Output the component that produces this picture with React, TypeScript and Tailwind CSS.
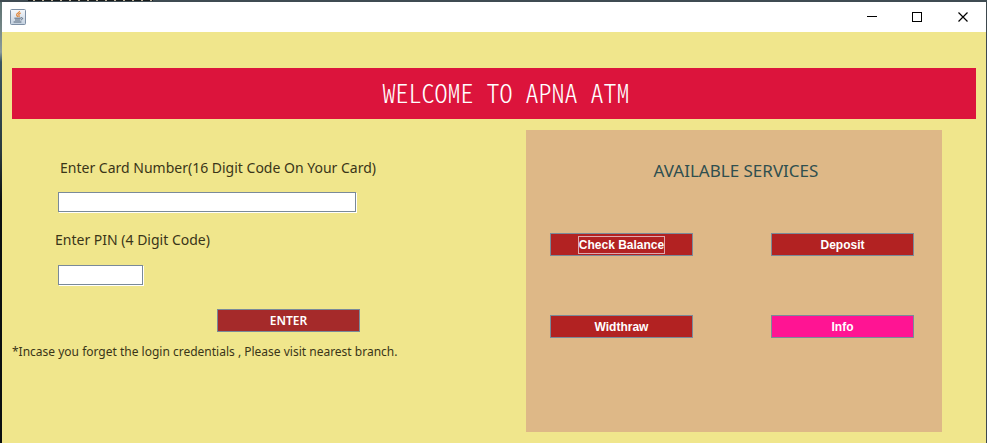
import type { ReactNode } from "react";

function JavaIcon() {
  return (
    <svg width="16" height="16" viewBox="0 0 16 16" aria-hidden="true" className="shrink-0">
      <defs>
        <linearGradient id="tile" x1="0" y1="0" x2="0" y2="1">
          <stop offset="0" stopColor="#f6f8fb" />
          <stop offset="1" stopColor="#c3d0df" />
        </linearGradient>
      </defs>
      <rect x="0.5" y="0.5" width="15" height="15" rx="1" fill="url(#tile)" stroke="#7d8fa5" />
      <path d="M9.5 2C10 3.800 6.200 4.200 6.600 6c.2.8 1 1.200 1.200 2M10.800 4C9 4.600 8.300 5.400 9 6.400c.4.5.2 1.100-.2 1.600" fill="none" stroke="#e08a42" strokeWidth="1.3" />
      <path d="M4.400 9.200H10.800M5 11H10M3.600 13H11.400" fill="none" stroke="#56687c" strokeWidth="1" />
      <path d="M10.800 8.800C13.400 8.200 13.200 10.600 10.600 11" fill="none" stroke="#56687c" strokeWidth="1" />
    </svg>
  );
}

function WindowControl({ label, children }: { label: string; children: ReactNode }) {
  return (
    <button type="button" aria-label={label} className="flex h-[30px] w-[46px] items-center justify-center">
      <svg width="11" height="11" viewBox="0 0 11 11" fill="none" stroke="#000" shapeRendering="crispEdges">
        {children}
      </svg>
    </button>
  );
}

function TitleBar() {
  return (
    <header className="flex h-[30px] items-center justify-between bg-white pl-2">
      <JavaIcon />
      <div className="flex">
        <WindowControl label="Minimize"><path d="M1 4.500H11" /></WindowControl>
        <WindowControl label="Maximize"><path d="M.5 .5H9.500V9.500H.5Z" /></WindowControl>
        <WindowControl label="Close"><path d="M.5 .5L9.500 9.500M9.500 .5L.5 9.500" shapeRendering="auto" strokeWidth="1.2" /></WindowControl>
      </div>
    </header>
  );
}

function ServiceButton({ children, color = "bg-[#b22222]", focused = false }: { children: ReactNode; color?: string; focused?: boolean }) {
  return (
    <button
      type="button"
      className={`flex h-[23px] w-[143px] items-center justify-center border border-[#7a8a99] font-['Liberation_Sans',Arial,sans-serif] text-xs font-bold text-white ${color}`}
    >
      <span className={focused ? "border border-[#e0a9ae] leading-4" : "leading-4"}>{children}</span>
    </button>
  );
}

const FIELD = "block h-5 border border-[#7a8a99] bg-white px-1 text-xs shadow-[1px_1px_0_#fff] outline-none";

export default function App() {
  return (
    <div className="flex min-h-screen flex-col bg-[#3d484e]">
      <div className="h-[2px] bg-[#3f4b52]">
        <div className="ml-7 h-px w-[125px] bg-[repeating-linear-gradient(90deg,#15191b_0_5px,#b9ae98_5px_7px,#15191b_7px_9px)]" />
      </div>
      <div className="flex flex-1 bg-[linear-gradient(#5b7070_0,#8b9b9b_50px,#3a5560_60px,#2a3a3d_150px,#0a0e10_200px,#0a0e10)] pl-[2px]">
        <div className="flex flex-1 flex-col border-r border-[#3d484e] bg-[#f0e68c]">
          <TitleBar />
          <main className="flex flex-1 flex-col px-2.5 pt-9">
            <h1 className="bg-[#dc143c] pb-1 pl-6 text-center font-['Noto_Sans_CJK_SC',monospace] text-[26px] leading-[47px] font-light text-white [font-feature-settings:'hwid']">
              WELCOME TO APNA ATM
            </h1>
            <div className="mt-[11px] grid grid-cols-[514fr_416fr] pr-[34px]">
              <form className="flex flex-col items-start pt-7 font-['Noto_Sans',Tahoma,sans-serif] text-[#3a3518]" onSubmit={(e) => e.preventDefault()}>
                <label htmlFor="card" className="ml-12 text-sm leading-5">Enter Card Number(16 Digit Code On Your Card)</label>
                <input id="card" type="text" className={`mt-3.5 ml-[46px] w-[298px] ${FIELD}`} />
                <label htmlFor="pin" className="mt-[18px] ml-[43px] text-sm leading-5">Enter PIN (4 Digit Code)</label>
                <input id="pin" type="password" className={`mt-[15px] ml-[46px] w-[85px] ${FIELD}`} />
                <button type="submit" className="mt-6 ml-[205px] h-[23px] w-[143px] border border-[#7a8a99] bg-[#a52a2a] text-xs font-semibold text-white">
                  ENTER
                </button>
                <p className="mt-2.5 text-xs leading-5">*Incase you forget the login credentials , Please visit nearest branch.</p>
              </form>
              <section className="flex h-[302px] flex-col bg-[#deb887] pt-[29px] pr-7 pl-6">
                <h2 className="pl-2 text-center font-['Noto_Sans',sans-serif] text-[17px] leading-6 text-[#2f4f4f]">AVAILABLE SERVICES</h2>
                <div className="mt-[50px] grid grid-cols-[auto_auto] justify-between gap-y-[59px]">
                  <ServiceButton focused>Check Balance</ServiceButton>
                  <ServiceButton>Deposit</ServiceButton>
                  <ServiceButton>Widthraw</ServiceButton>
                  <ServiceButton color="bg-[#ff1493]">Info</ServiceButton>
                </div>
              </section>
            </div>
          </main>
        </div>
      </div>
    </div>
  );
}
